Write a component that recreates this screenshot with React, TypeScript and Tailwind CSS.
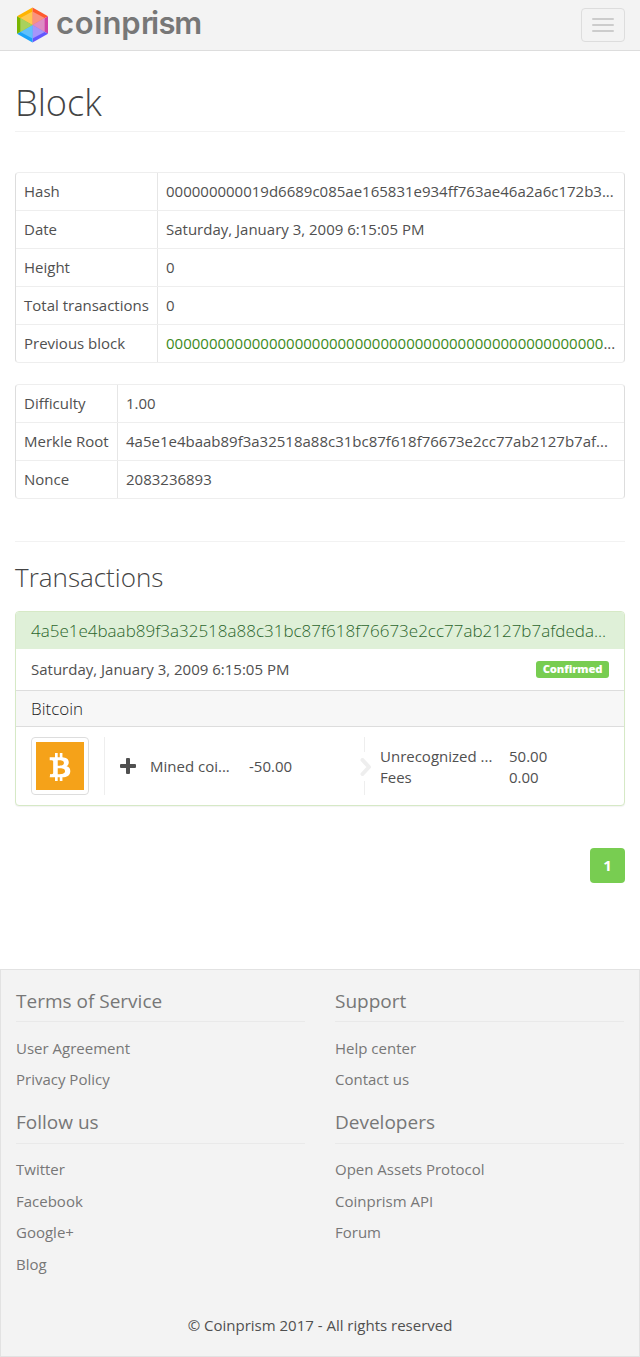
import type { ReactNode } from "react";
import { FaBtc } from "react-icons/fa";

function Logo() {
  return (
    <svg width="190" height="50" viewBox="0 0 190 50" role="img" aria-label="coinprism">
      <path d="M17.5 7.5 L2 16.3 L17.5 25 Z" fill="#ffb400" />
      <path d="M17.5 7.5 L33 16.3 L17.5 25 Z" fill="#ff5a2c" />
      <path d="M33 16.3 V33.7 L17.5 25 Z" fill="#cf42a6" />
      <path d="M33 33.7 L17.5 42.5 V25 Z" fill="#6257ff" />
      <path d="M17.5 42.5 L2 33.7 L17.5 25 Z" fill="#19a2fa" />
      <path d="M2 33.7 V16.3 L17.5 25 Z" fill="#78b500" />
      <path d="M17.5 11.5 L5.3 18 L17.5 25 Z" fill="#ffc84f" />
      <path d="M17.5 11.5 L29.7 18 L17.5 25 Z" fill="#f9937f" />
      <path d="M29.7 18 V32 L17.5 25 Z" fill="#dd8cc4" />
      <path d="M29.7 32 L17.5 38.5 V25 Z" fill="#a596fa" />
      <path d="M17.5 38.5 L5.3 32 L17.5 25 Z" fill="#60c0fb" />
      <path d="M5.3 32 V18 L17.5 25 Z" fill="#a9d15c" />
      <text
        x="41 59.8 79.3 87.5 106.3 126 136 143.6 159.2"
        y="33.8"
        fill="#777777"
        className="font-['Inter',sans-serif] text-[31px] font-semibold"
      >
        coinprism
      </text>
    </svg>
  );
}

type Row = { label: string; value: ReactNode };

function InfoTable({ rows, labelClass }: { rows: Row[]; labelClass: string }) {
  return (
    <div className="overflow-hidden rounded border border-[#dddddd] border-y-[#eeeeee]">
      {rows.map((row, i) => (
        <div
          key={row.label}
          className={
            i === rows.length - 1 ? "flex h-[37px]" : "flex h-[38px] border-b border-[#eeeeee]"
          }
        >
          <div className={`${labelClass} shrink-0 border-r border-[#e6e6e6] pl-2 leading-[36px]`}>
            {row.label}
          </div>
          <div className="min-w-0 flex-1 truncate px-2 leading-[36px]">{row.value}</div>
        </div>
      ))}
    </div>
  );
}

function FooterSection({
  title,
  links,
  className,
  titleClass = "leading-[39px]",
  itemClass = "h-[31.5px] leading-[31px]",
}: {
  title: string;
  links: string[];
  className: string;
  titleClass?: string;
  itemClass?: string;
}) {
  return (
    <section className={className}>
      <h4 className={`h-[41px] border-b border-[#e9e9e9] text-[19px] ${titleClass}`}>{title}</h4>
      <ul className="pt-[10px]">
        {links.map((link) => (
          <li key={link} className={itemClass}>
            <a href="#">{link}</a>
          </li>
        ))}
      </ul>
    </section>
  );
}

const blockRows: Row[] = [
  { label: "Hash", value: "000000000019d6689c085ae165831e934ff763ae46a2a6c172b3..." },
  { label: "Date", value: "Saturday, January 3, 2009 6:15:05 PM" },
  { label: "Height", value: "0" },
  { label: "Total transactions", value: "0" },
  {
    label: "Previous block",
    value: (
      <>
        <a href="#" className="text-[#3c8a22]">
          {"0".repeat(51)}
        </a>
        ...
      </>
    ),
  },
];

const detailRows: Row[] = [
  { label: "Difficulty", value: "1.00" },
  { label: "Merkle Root", value: "4a5e1e4baab89f3a32518a88c31bc87f618f76673e2cc77ab2127b7af..." },
  { label: "Nonce", value: "2083236893" },
];

export default function App() {
  return (
    <div className="flex h-[1357px] w-[640px] flex-col bg-white font-['Open_Sans',sans-serif] text-[15px] leading-[21px] text-[#505050]">
      <header className="flex h-[51px] shrink-0 items-start justify-between border-b border-[#dddddd] bg-[#f3f3f3] pl-[15px] pr-[15px]">
        <Logo />
        <button
          aria-label="Menu"
          className="mt-2 flex h-[34px] w-11 flex-col items-center justify-center gap-1 rounded border border-[#dddddd]"
        >
          <span className="h-0.5 w-[22px] rounded-[1px] bg-[#cccccc]" />
          <span className="h-0.5 w-[22px] rounded-[1px] bg-[#cccccc]" />
          <span className="h-0.5 w-[22px] rounded-[1px] bg-[#cccccc]" />
        </button>
      </header>

      <main className="h-[918px] shrink-0 px-[15px]">
        <h1 className="h-[81px] border-b border-[#f2f2f2] pt-[30px] text-[36.2px] font-light leading-[43px] text-[#444444]">
          Block
        </h1>

        <div className="mt-10 flex flex-col gap-[21px]">
          <InfoTable rows={blockRows} labelClass="w-[142px]" />
          <InfoTable rows={detailRows} labelClass="w-[102px]" />
        </div>

        <h2 className="mt-[42px] h-[70px] border-t border-[#f2f2f2] pt-[20px] text-[26px] font-light leading-[30px] text-[#444444]">
          Transactions
        </h2>

        <section className="h-[195px] overflow-hidden rounded border border-[#d6e9c6] bg-white shadow-[0_1px_1px_rgba(0,0,0,0.05)]">
          <h3 className="h-[37px] bg-[#dff0d8] px-[15px] text-[17px] font-light leading-[37px] text-[#2c662d]">
            <a href="#">4a5e1e4baab89f3a32518a88c31bc87f618f76673e2cc77ab2127b7afdeda...</a>
          </h3>
          <div className="flex h-[42px] items-center justify-between border-b border-[#dddddd] px-[15px]">
            <span>Saturday, January 3, 2009 6:15:05 PM</span>
            <span className="flex h-[17px] w-[73px] items-center justify-center rounded-[3px] bg-[#78cd51] text-[11.25px] font-extrabold leading-none tracking-[-0.15px] text-white">
              <span className="pb-px">Confirmed</span>
            </span>
          </div>
          <div className="h-9 border-b border-[#dddddd] bg-[#f7f7f7] px-[15px] text-[17px] font-light leading-9 text-[#222222]">
            Bitcoin
          </div>
          <div className="flex h-[78px] px-[15px] py-[10px]">
            <div className="size-[58px] rounded border border-[#dddddd] p-1">
              <div className="flex size-12 items-center justify-center bg-[#f5a219] pt-0.5 text-white">
                <FaBtc size={28} />
              </div>
            </div>
            <div className="ml-[15px] flex w-[248px] items-center border-l border-[#eeeeee] pl-[15px]">
              <svg width="16" height="16" viewBox="0 0 16 16" fill="#505050" aria-hidden="true">
                <path d="M7 0h2q1 0 1 1v5h5q1 0 1 1v2q0 1-1 1h-5v5q0 1-1 1H7q-1 0-1-1v-5H1q-1 0-1-1V7q0-1 1-1h5V1q0-1 1-1Z" />
              </svg>
              <span className="ml-[14px] w-[99px]">Mined coi...</span>
              <span>-50.00</span>
            </div>
            <div className="flex w-7 flex-col items-start justify-between pl-2">
              <span className="ml-1 h-[15px] w-px bg-[#eeeeee]" />
              <svg width="12" height="18" viewBox="0 0 12 18" fill="none" aria-hidden="true">
                <path d="M2.5 2 L9 9 L2.5 16" stroke="#eeeeee" strokeWidth="4" strokeLinecap="round" strokeLinejoin="round" />
              </svg>
              <span className="ml-1 h-[14px] w-px bg-[#eeeeee]" />
            </div>
            <div className="grid grid-cols-[129px_80px] content-center pt-px">
              <span>Unrecognized ...</span>
              <span>50.00</span>
              <span>Fees</span>
              <span>0.00</span>
            </div>
          </div>
        </section>

        <nav className="mt-[42px] flex justify-end">
          <a
            href="#"
            className="flex h-[35px] w-[35px] items-center justify-center rounded bg-[#78cd51] font-bold text-white"
          >
            1
          </a>
        </nav>
      </main>

      <footer className="h-[388px] shrink-0 border border-[#e2e2e2] bg-[#f3f3f3] px-[15px] pt-[11px] text-[#777777]">
        <div className="grid grid-cols-2 gap-x-[30px]">
          <FooterSection
            title="Terms of Service"
            links={["User Agreement", "Privacy Policy"]}
            className="h-[122px]"
            titleClass="leading-[40px]"
            itemClass="h-[31px] leading-[32px]"
          />
          <FooterSection
            title="Support"
            links={["Help center", "Contact us"]}
            className="h-[122px]"
            titleClass="leading-[40px]"
            itemClass="h-[31px] leading-[32px]"
          />
          <FooterSection
            title="Follow us"
            links={["Twitter", "Facebook", "Google+", "Blog"]}
            className="h-[212px]"
          />
          <FooterSection
            title="Developers"
            links={["Open Assets Protocol", "Coinprism API", "Forum"]}
            className="h-[212px]"
          />
        </div>
        <p className="text-center text-[#505050]">© Coinprism 2017 - All rights reserved</p>
      </footer>
    </div>
  );
}
